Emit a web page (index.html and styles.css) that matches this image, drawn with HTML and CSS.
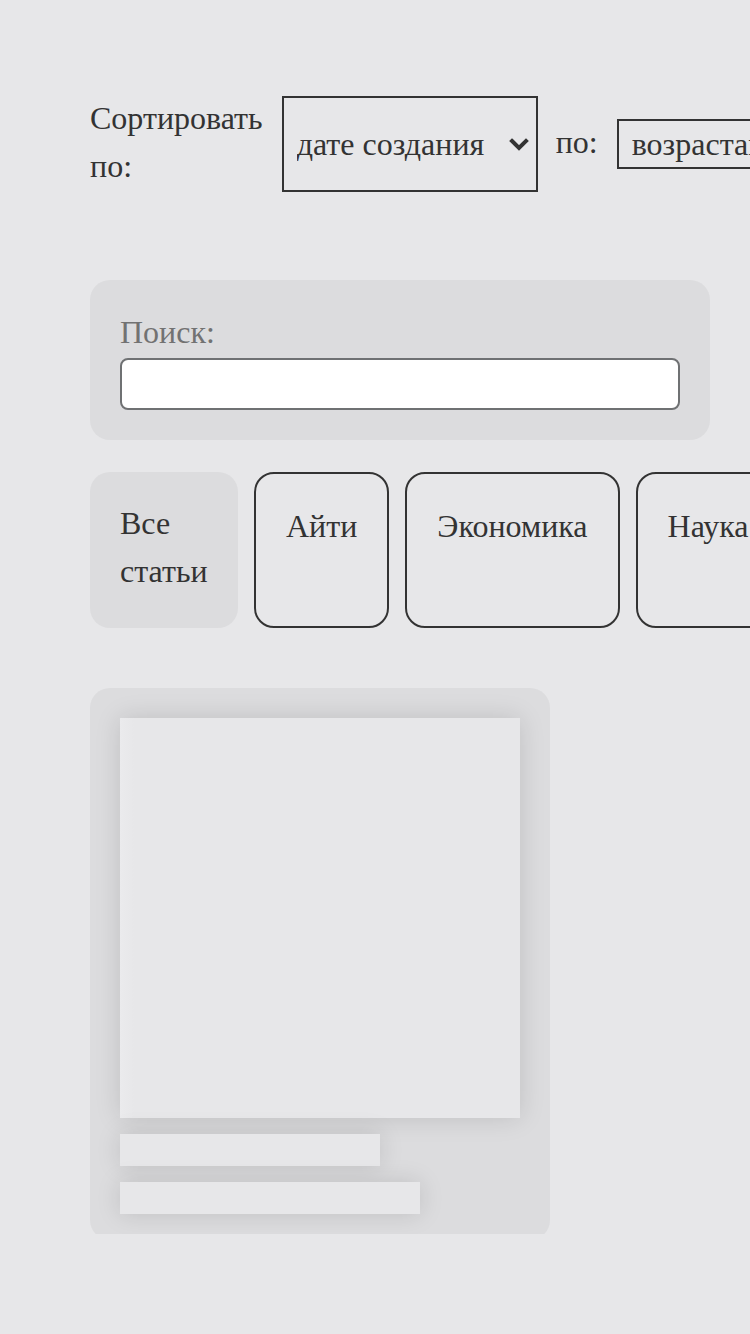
FILE: index.html
```html
<!DOCTYPE html>
<html lang="ru">
<head>
<meta charset="utf-8">
<title>Статьи</title>
<link rel="stylesheet" href="styles.css">
</head>
<body>
<main class="page">
  <div class="sort-row">
    <div class="sort-group">
      <label class="sort-label" for="sort-field">Сортировать по:</label>
      <div class="select-wrap select-wrap--tall">
        <select id="sort-field" class="sort-select">
          <option>дате создания</option>
        </select>
        <svg class="select-arrow" width="20" height="14" viewBox="0 0 20 14" aria-hidden="true">
          <polyline points="3,3 10,10 17,3" fill="none" stroke="#333" stroke-width="4" stroke-linecap="square"/>
        </svg>
      </div>
    </div>
    <div class="sort-group sort-group--center">
      <label class="sort-label" for="sort-dir">по:</label>
      <div class="select-wrap">
        <select id="sort-dir" class="sort-select">
          <option>возрастанию</option>
        </select>
        <svg class="select-arrow" width="20" height="14" viewBox="0 0 20 14" aria-hidden="true">
          <polyline points="3,3 10,10 17,3" fill="none" stroke="#333" stroke-width="4" stroke-linecap="square"/>
        </svg>
      </div>
    </div>
  </div>

  <section class="search-panel">
    <label class="search-label" for="search">Поиск:</label>
    <input id="search" class="search-input" type="text">
  </section>

  <nav class="chips">
    <button class="chip chip--active">Все статьи</button>
    <button class="chip">Айти</button>
    <button class="chip">Экономика</button>
    <button class="chip">Наука</button>
  </nav>

  <div class="cards">
    <article class="card">
      <div class="card-image"></div>
      <div class="card-line card-line--short"></div>
      <div class="card-line card-line--long"></div>
    </article>
  </div>
</main>
</body>
</html>
```

FILE: styles.css
```css
html, body {
  margin: 0;
  padding: 0;
  background: #e7e7e9;
  overflow: hidden;
}

body {
  font-family: "Liberation Serif", "Times New Roman", serif;
  font-size: 32px;
  line-height: 48px;
  color: #333;
}

.page {
  padding: 96px 0 0 90px;
  width: 1200px;
}

.sort-row {
  display: flex;
  align-items: center;
  gap: 18px;
}

.sort-group {
  display: flex;
  align-items: stretch;
  gap: 19px;
}

.sort-group--center {
  align-items: center;
  gap: 19px;
}

.sort-label {
  width: min-content;
  position: relative;
  top: -2px;
}

.select-wrap {
  position: relative;
  display: flex;
}

.select-wrap--tall {
  width: 256px;
}

.sort-select {
  -webkit-appearance: none;
  appearance: none;
  font-family: inherit;
  font-size: 32px;
  color: #333;
  background-color: transparent;
  border: 2px solid #333;
  border-radius: 0;
  padding: 0 48px 0 13px;
  height: 50px;
  line-height: 46px;
  width: 100%;
}

.select-wrap--tall .sort-select {
  height: auto;
}

.select-arrow {
  position: absolute;
  right: 9px;
  top: 50%;
  margin-top: -6px;
  pointer-events: none;
}

.search-panel {
  margin-top: 88px;
  width: 620px;
  box-sizing: border-box;
  padding: 30px;
  background: #dcdcde;
  border-radius: 20px;
  display: flex;
  flex-direction: column;
}

.search-label {
  color: #727272;
  line-height: 44px;
  padding-bottom: 4px;
}

.search-input {
  height: 52px;
  box-sizing: border-box;
  border: 2px solid #6f7173;
  border-radius: 8px;
  background: #fff;
  font-family: inherit;
  font-size: 24px;
  padding: 0 10px;
}

.chips {
  margin-top: 32px;
  display: flex;
  gap: 16px;
  align-items: stretch;
}

.chip {
  font-family: inherit;
  font-size: 32px;
  line-height: 48px;
  color: #333;
  background: transparent;
  border: 2px solid #333;
  border-radius: 20px;
  padding: 28px 30px;
  text-align: left;
  display: flex;
  align-items: flex-start;
}

.chip--active {
  border: none;
  background: #dcdcde;
  width: 148px;
  padding: 27px 30px 33px;
}

.cards {
  margin-top: 60px;
  height: 546px;
  overflow: hidden;
}

.card {
  width: 460px;
  box-sizing: border-box;
  padding: 30px 30px 26px;
  background: #dcdcde;
  border-radius: 20px;
  display: flex;
  flex-direction: column;
  gap: 16px;
}

.card-image {
  width: 400px;
  height: 400px;
  background: linear-gradient(90deg, #ebebed 0, #e7e7e9 14px, #e7e7e9 100%);
  box-shadow: 0 0 24px rgba(0, 0, 0, 0.13);
}

.card-line {
  height: 32px;
  background: #e7e7e9;
  box-shadow: 0 0 24px rgba(0, 0, 0, 0.13);
}

.card-line--short {
  width: 260px;
}

.card-line--long {
  width: 300px;
}
```
